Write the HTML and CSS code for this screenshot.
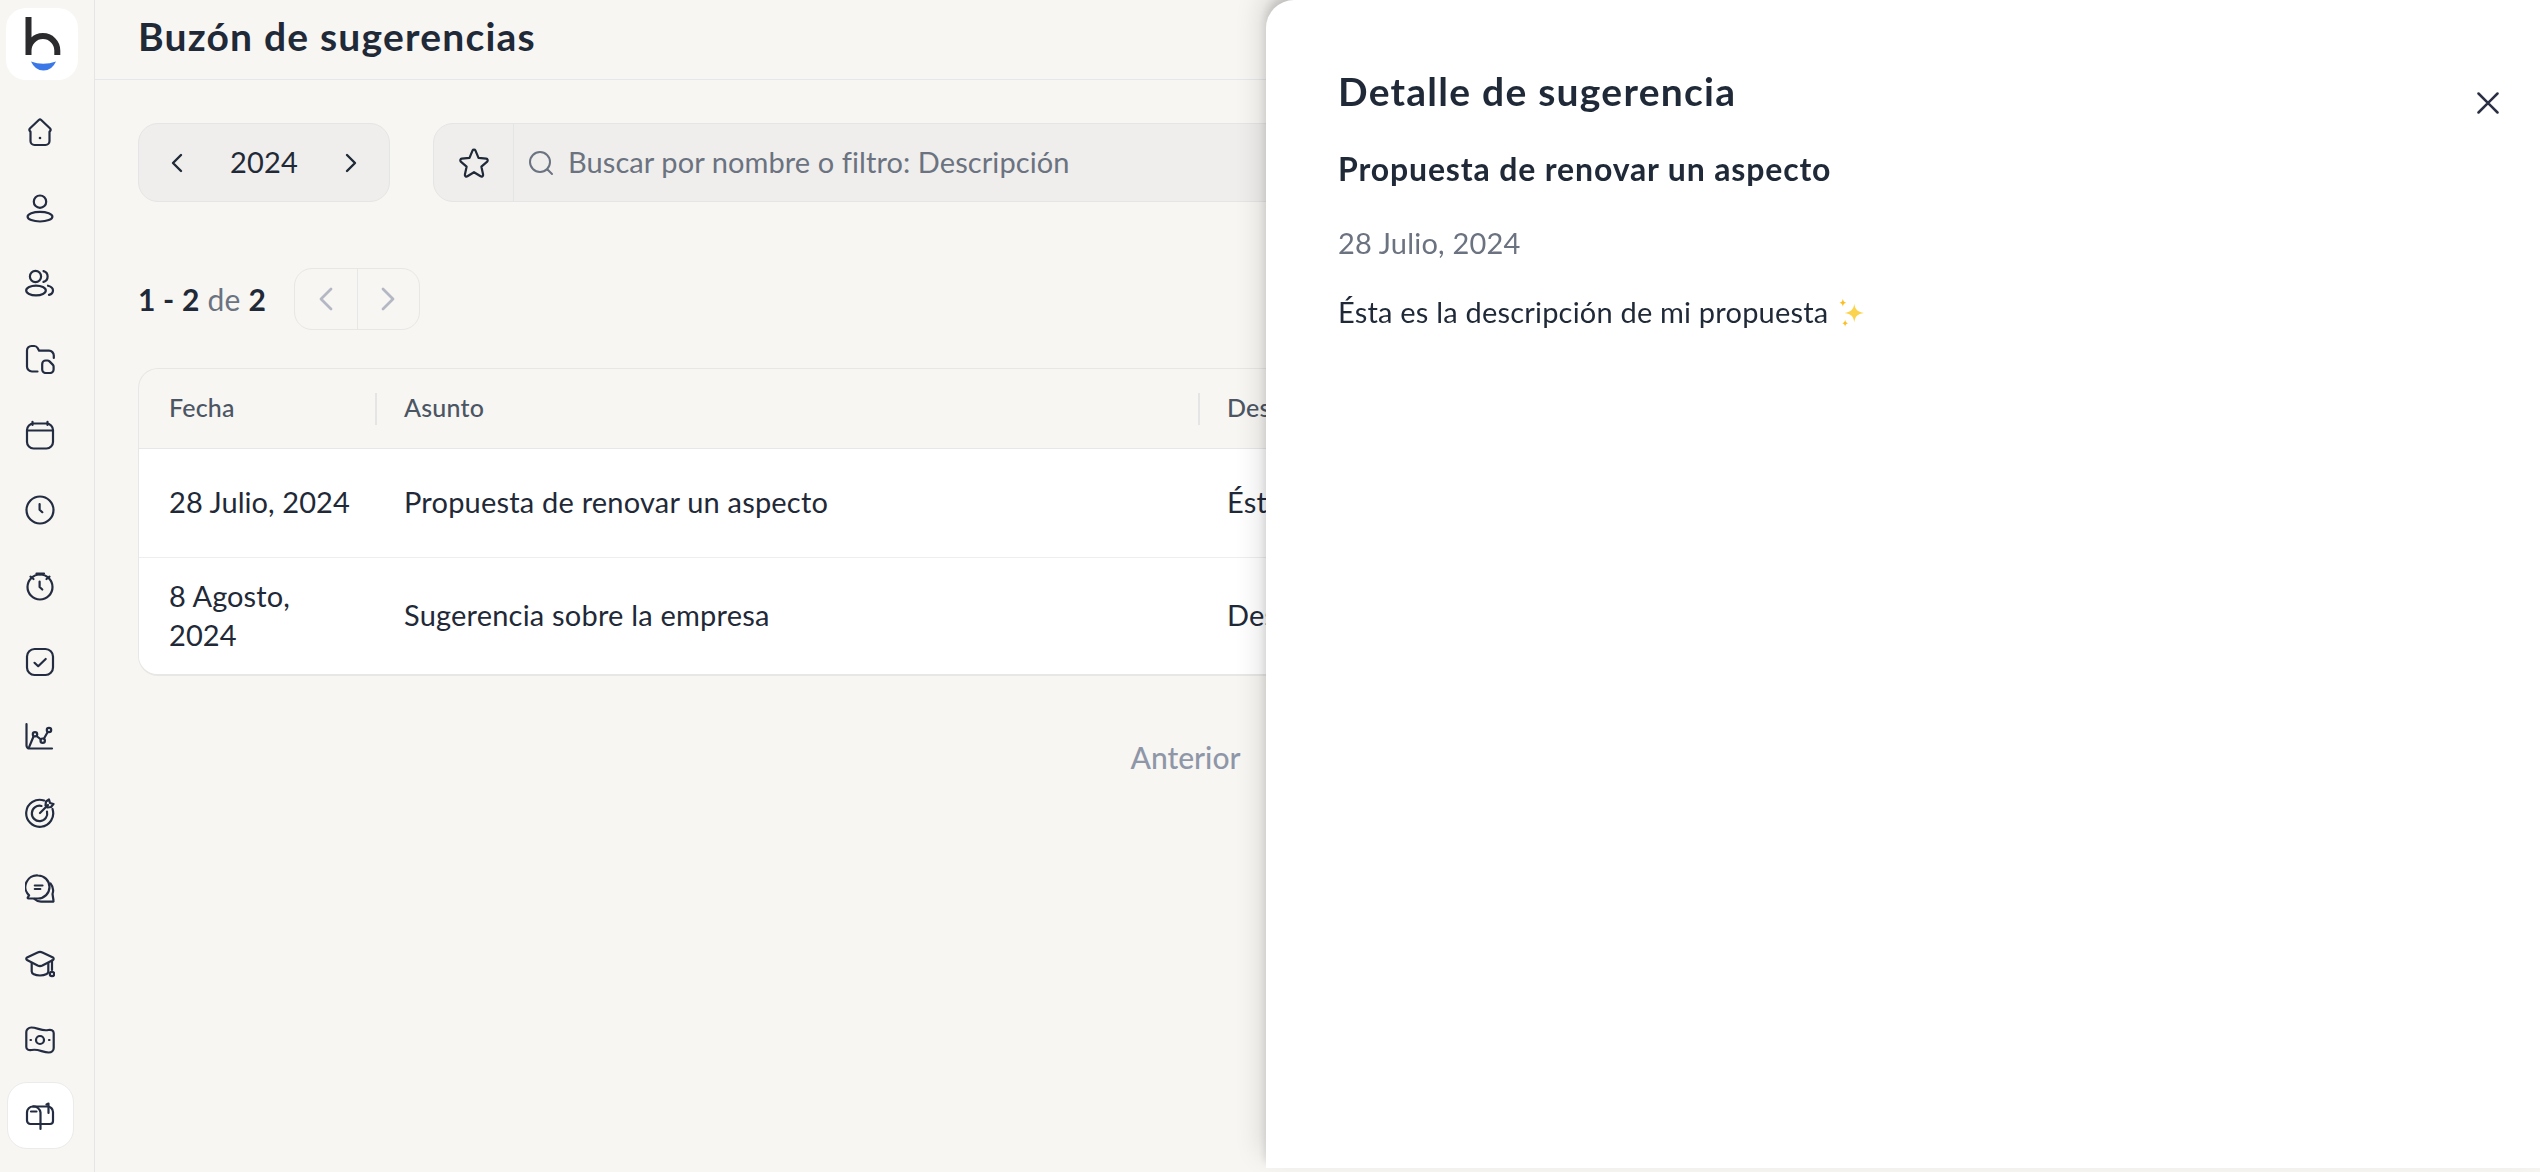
FILE: index.html
```html
<!DOCTYPE html>
<html lang="es">
<head>
    <meta charset="UTF-8">
    <meta name="viewport" content="width=device-width, initial-scale=1.0">
    <title>Buzón de sugerencias</title>
    <link rel="stylesheet" href="styles.css">
</head>
<body>
<div class="app">
    <nav class="sidebar">
        <div class="logo">
            <svg width="72" height="72" viewBox="6 8 72 72">
                <path d="M28.500 17V55M28.500 55V50.500a14.400 14.400 0 0 1 28.800 0V55" fill="none" stroke="#2b2b2d" stroke-width="6"/>
                <path d="M31 61.500Q43 66 56 61.500Q52 70.500 43.500 70.500Q35 70.500 31 61.500Z" fill="#3b78e7"/>
            </svg>
        </div>
        <a class="nav_item"><svg class="nav_icon" viewBox="0 0 30 30"><path d="M13.800 3a1.800 1.800 0 0 1 2.400 0l8.700 8.200c.8.800.9 2 .2 3l-.6.500V24a4 4 0 0 1-4 4H9.500a4 4 0 0 1-4-4v-9.300l-.6-.5c-.7-1-.6-2.200.2-3z"/><circle class="dot" cx="15" cy="21" r="1.300"/></svg></a>
        <a class="nav_item"><svg class="nav_icon" viewBox="0 0 30 30"><circle cx="15" cy="8.700" r="6.200"/><ellipse cx="15" cy="23.700" rx="12.400" ry="4.800"/></svg></a>
        <a class="nav_item"><svg class="nav_icon" viewBox="0 0 30 30"><circle cx="10.500" cy="8.500" r="5.600"/><ellipse cx="11" cy="22.500" rx="9.800" ry="4.800"/><path d="M18.500 3.100a5.600 5.600 0 0 1 0 10.800M23 17.700c3.200.8 5 2.700 5 4.700s-1.500 3.700-4 4.500"/></svg></a>
        <a class="nav_item"><svg class="nav_icon" viewBox="0 0 30 30"><path d="M12.500 27.500H7a5 5 0 0 1-5-5V6.500A4.500 4.500 0 0 1 6.500 2h2.800c1.500 0 2.500.7 3.300 2l1.500 2.700H24a4.800 4.800 0 0 1 4.800 4.800v2.500"/><path d="M17.200 25.500V20a3.500 3.500 0 0 1 3.500-3.500h1.800c.8 0 1.400.3 2 .9l3.200 3.200c.6.600.9 1.200.9 2v2.900a3.500 3.500 0 0 1-3.500 3.500h-4.400a3.500 3.500 0 0 1-3.500-3.500z"/></svg></a>
        <a class="nav_item"><svg class="nav_icon" viewBox="0 0 30 30"><rect x="2" y="3.500" width="26" height="25" rx="6.500"/><path d="M2.500 10.500H27.500M7.500 1.800V5M22.500 1.800V5"/></svg></a>
        <a class="nav_item"><svg class="nav_icon" viewBox="0 0 30 30"><circle cx="15" cy="15" r="13.500"/><path d="M14.600 9v5.700l2.700 2.500"/></svg></a>
        <a class="nav_item"><svg class="nav_icon" viewBox="0 0 30 30"><circle cx="15" cy="16" r="12.500"/><path d="M14.600 10.500v5.500l2.700 2.500M11.500 2.500h7.500M15 2.500v1M5.500 5.700l3 2.300M24.500 5.700l-3 2.300"/></svg></a>
        <a class="nav_item"><svg class="nav_icon" viewBox="0 0 30 30"><rect x="2" y="2" width="26" height="26" rx="7.500"/><path d="M9.500 15.800l3.700 3.400 7.500-7.200"/></svg></a>
        <a class="nav_item"><svg class="nav_icon" viewBox="0 0 30 30"><path d="M1.500 2v21.500a3 3 0 0 0 3 3h22.500M4.300 24.700L8.500 14.500M11.500 14l4.500 3.500M19 16.500l3.700-6.500"/><circle cx="10" cy="12.300" r="2.200"/><circle cx="17.700" cy="18.700" r="2.200"/><circle cx="24" cy="8" r="2.200"/></svg></a>
        <a class="nav_item"><svg class="nav_icon" viewBox="0 0 30 30"><path d="M19 2.500a13.500 13.500 0 1 0 8.500 8.500"/><path d="M16.500 8a7.700 7.700 0 1 0 5.500 5.500"/><path d="M15 15l8-8M20.500 7.500l.5-4 3-2 1 3.500 3.500 1-2.500 3-3.500.5z"/></svg></a>
        <a class="nav_item"><svg class="nav_icon" viewBox="0 0 30 30"><path d="M13 1.500a11.500 11.500 0 0 1 11.500 11.500c0 6.300-5.200 11.500-11.500 11.500H3.500c-.8 0-1.100-.8-.6-1.400l1.200-1.700A11.500 11.500 0 0 1 13 1.500z"/><path d="M9.800 11.500h7.700M9.800 15h5.500M25.500 9.500c2.500 3 3.200 7 2 10.500l1 6.500c.2 1-.2 1.300-1 1.200H16c-2.500 0-4.700-1-6.500-2.700"/></svg></a>
        <a class="nav_item"><svg class="nav_icon" viewBox="0 0 30 30"><path d="M12.600 3.500a6 6 0 0 1 4.800 0l10.600 5c.9.500.9 2 0 2.500l-10.600 5.500a6 6 0 0 1-4.800 0L2 11c-1-.5-1-2 0-2.500z"/><path d="M6.700 14v8.500c0 2 3 4 8.300 4s8.300-2 8.300-4V14M27 11.500V21"/><circle cx="27" cy="25" r="2.200"/></svg></a>
        <a class="nav_item"><svg class="nav_icon" viewBox="0 0 30 30"><path d="M1.300 7c0-2 2-4.500 5-4.500 6 0 10.500 4 17 2.500 2.500-.5 5.400 0 5.400 3v15c0 2.500-2 4.500-5 4.500-6 0-10.500-4-17-2.500-3 .5-5.400-.5-5.400-3z"/><circle cx="15" cy="15" r="4"/><path d="M5.500 15h.5M24 15h.5"/></svg></a>
        <a class="nav_item active"><span class="active_tile"><svg class="nav_icon" viewBox="0 0 30 30"><path d="M15.500 23H5.500A3.500 3.500 0 0 1 2 19.500V11.500A6 6 0 0 1 8 5.500h14.500a5.500 5.500 0 0 1 5.500 5.500v9c0 1.800-1.200 3-3 3h-9.500"/><path d="M8 5.500a7 7 0 0 1 7.500 6V28M6 10.500h5.500M23.500 12V2.500l-2 1"/></svg></span></a>
    </nav>

    <main class="main">
        <header class="top_bar">
            <h1>Buzón de sugerencias</h1>
        </header>

        <div class="content">
            <div class="toolbar">
                <div class="year_box">
                    <svg class="chev" viewBox="0 0 12 20"><path d="M10 2L2 10l8 8"/></svg>
                    <span class="year">2024</span>
                    <svg class="chev" viewBox="0 0 12 20"><path d="M2 2l8 8-8 8"/></svg>
                </div>
                <div class="search_box">
                    <div class="fav_btn">
                        <svg width="32" height="32" viewBox="0 0 32 32"><path class="star" d="M14.500 3.600a1.700 1.700 0 0 1 3 0l3 7.300 7.700.8c1.500.2 2 2 1 3l-5.800 5 1.700 7.800c.3 1.500-1.200 2.600-2.500 1.800L16 25.200l-6.600 4.100c-1.300.8-2.800-.3-2.500-1.800l1.700-7.800-5.800-5c-1-1-.5-2.800 1-3l7.700-.8z"/></svg>
                    </div>
                    <svg class="search_icon" width="26" height="26" viewBox="0 0 26 26"><circle cx="12" cy="12" r="10"/><path d="M19.500 19.500l4.500 4.500"/></svg>
                    <span class="placeholder">Buscar por nombre o filtro: Descripción</span>
                </div>
            </div>

            <div class="count_row">
                <span class="count"><b>1 - 2</b> de <b>2</b></span>
                <div class="count_btns">
                    <span class="count_btn"><svg class="chev light" viewBox="0 0 14 24"><path d="M12 2L2 12l10 10"/></svg></span>
                    <span class="count_btn"><svg class="chev light" viewBox="0 0 14 24"><path d="M2 2l10 10L2 22"/></svg></span>
                </div>
            </div>

            <div class="table_wrap">
                <table class="table">
                    <thead>
                        <tr><th class="col_date">Fecha</th><th class="col_subject">Asunto</th><th>Descripción</th></tr>
                    </thead>
                    <tbody>
                        <tr class="row_one"><td>28 Julio, 2024</td><td>Propuesta de renovar un aspecto</td><td>Ésta es la descripción de mi propuesta</td></tr>
                        <tr><td>8 Agosto, 2024</td><td>Sugerencia sobre la empresa</td><td>Descripción de la sugerencia</td></tr>
                    </tbody>
                </table>
            </div>

            <div class="pager">
                <span>Anterior</span>
                <span class="page_num">1</span>
                <span class="next">Siguiente</span>
            </div>
        </div>
    </main>
</div>

<aside class="panel">
    <svg class="close" width="24" height="24" viewBox="0 0 24 24"><path d="M2.500 2.500l19 19M21.500 2.500l-19 19"/></svg>
    <h2>Detalle de sugerencia</h2>
    <h3>Propuesta de renovar un aspecto</h3>
    <p class="panel_date">28 Julio, 2024</p>
    <p class="panel_text">Ésta es la descripción de mi propuesta
        <svg class="sparkle" width="32" height="32" viewBox="0 0 28 28"><path d="M16 6c.8 5 2.500 7 8.500 8-6 1-7.700 3-8.500 8-.8-5-2.500-7-8.500-8 6-1 7.700-3 8.500-8z" fill="#fcd34d"/><path d="M6 1.500c.3 2.200 1 3 3 3.500-2 .5-2.700 1.300-3 3.500-.3-2.200-1-3-3-3.500 2-.5 2.700-1.300 3-3.500zM8 20c.3 1.800.8 2.500 2.500 3-1.700.5-2.200 1.200-2.500 3-.3-1.800-.8-2.500-2.500-3 1.700-.5 2.200-1.200 2.500-3z" fill="#fbbf24"/></svg>
    </p>
</aside>
</body>
</html>
```

FILE: styles.css
```css
body{
    margin:0;
    background-color: #f7f6f3;
    color: #1f2937;
    font-family: "Lato", "Noto Sans", sans-serif;
    font-size: 29px;
    letter-spacing: 0.2px;
    overflow: hidden;
}
h1, h2, h3, p{
    margin:0;
}
.app{
    display: flex;
    height: 1172px;
}

/* sidebar */
.sidebar{
    width: 94px;
    flex-shrink: 0;
    border-right: 1px solid #e5e5e5;
    box-sizing: content-box;
    display: flex;
    flex-direction: column;
    padding-top: 8px;
}
.logo{
    width: 72px;
    height: 72px;
    margin-left: 6px;
    margin-bottom: 14px;
    background-color: white;
    border-radius: 20px;
}
.logo svg{
    display: block;
}
.nav_item{
    width: 80px;
    height: 75.7px;
    display: flex;
    align-items: center;
    justify-content: center;
    flex-shrink: 0;
}
.nav_icon{
    width: 30px;
    height: 30px;
    fill: none;
    stroke: #232c40;
    stroke-width: 2.2;
    stroke-linecap: round;
    stroke-linejoin: round;
}
.nav_icon .dot{
    fill: #232c40;
    stroke: none;
}
.active_tile{
    width: 67px;
    height: 67px;
    background-color: white;
    border: 1px solid #ebebeb;
    border-radius: 20px;
    box-sizing: border-box;
    display: flex;
    align-items: center;
    justify-content: center;
}

/* main */
.main{
    flex: 1;
    min-width: 0;
}
.top_bar{
    height: 79px;
    border-bottom: 1px solid #e5e7eb;
    padding-left: 43px;
    display: flex;
    align-items: center;
}
.top_bar h1{
    font-size: 39px;
    font-weight: 700;
    letter-spacing: 1.2px;
    padding-bottom: 7px;
}
.content{
    padding: 43px 43px 0 43px;
}
.toolbar{
    display: flex;
    gap: 43px;
    height: 79px;
}
.year_box{
    width: 252px;
    box-sizing: border-box;
    background-color: #efeeec;
    border: 1px solid #e5e5e5;
    border-radius: 20px;
    padding: 0 32px;
    display: flex;
    align-items: center;
    justify-content: space-between;
}
.year{
    font-size: 29px;
    padding-bottom: 2px;
}
.chev{
    width: 12px;
    height: 20px;
    fill: none;
    stroke: #1f2937;
    stroke-width: 2.4;
    stroke-linecap: round;
    stroke-linejoin: round;
}
.chev.light{
    width: 14px;
    height: 24px;
    stroke: #b4b8c4;
    stroke-width: 2.8;
}
.search_box{
    flex: 1;
    background-color: #efeeec;
    border: 1px solid #e5e5e5;
    border-radius: 20px;
    display: flex;
    align-items: center;
    color: #6b7280;
}
.placeholder{
    padding-bottom: 3px;
    margin-left: -1px;
    letter-spacing: 0.08px;
}
.fav_btn{
    width: 79px;
    height: 100%;
    border-right: 1px solid #e5e5e5;
    display: flex;
    align-items: center;
    justify-content: center;
    flex-shrink: 0;
}
.star{
    fill: none;
    stroke: #1f2937;
    stroke-width: 2.200;
    stroke-linejoin: round;
}
.search_icon{
    margin-left: 14px;
    margin-right: 15px;
    fill: none;
    stroke: #6b7280;
    stroke-width: 2;
    stroke-linecap: round;
}
.count_row{
    display: flex;
    align-items: center;
    margin-top: 66px;
    height: 62px;
}
.count{
    color: #6b7280;
    width: 156px;
    font-size: 30px;
    letter-spacing: 0.2px;
}
.count b{
    color: #1f2937;
    font-weight: 700;
}
.count_btns{
    display: flex;
    width: 126px;
    height: 62px;
    box-sizing: border-box;
    border: 1px solid #e7e7e7;
    border-radius: 18px;
}
.count_btn{
    flex: 1;
    display: flex;
    align-items: center;
    justify-content: center;
}
.count_btn + .count_btn{
    border-left: 1px solid #e7e7e7;
}

/* table */
.table_wrap{
    margin-top: 38px;
    border: 1px solid #e7e7e5;
    border-bottom-width: 2px;
    border-radius: 20px;
    overflow: hidden;
    box-sizing: border-box;
}
.table{
    width: 100%;
    border-collapse: collapse;
    table-layout: fixed;
}
.table th{
    height: 79px;
    box-sizing: border-box;
    padding: 0 0 3px 29px;
    text-align: left;
    font-size: 25px;
    font-weight: 500;
    color: #4b5563;
    position: relative;
    border-bottom: 1px solid #e7e7e5;
}
.table th + th::before{
    content: "";
    position: absolute;
    left: 0;
    top: 24px;
    height: 32px;
    width: 2px;
    background-color: #e5e5e5;
}
.col_date{
    width: 236px;
}
.col_subject{
    width: 823px;
}
.table th:first-child, .table td:first-child{
    padding-left: 30px;
    letter-spacing: 0.08px;
}
.table th:first-child{
    letter-spacing: 0.2px;
}
.table td{
    padding: 18px 14px 20px 29px;
    background-color: white;
    line-height: 39px;
}
.row_one td{
    height: 109px;
    box-sizing: border-box;
    border-bottom: 1px solid #eeeeee;
}
.pager{
    display: flex;
    justify-content: center;
    align-items: center;
    gap: 44px;
    margin-top: 63px;
    color: #8f96a8;
    font-weight: 500;
    font-size: 30px;
    letter-spacing: 0;
}
.page_num{
    width: 48px;
    text-align: center;
}
.next{
    width: 128px;
}

/* detail panel */
.panel{
    position: fixed;
    top: 0;
    right: 0;
    width: 1274px;
    height: 1168px;
    box-sizing: border-box;
    padding: 68px 72px 0;
    background-color: white;
    border-top-left-radius: 28px;
    box-shadow: -1px -6px 8px rgba(0, 0, 0, 0.12), -4px -14px 28px rgba(0, 0, 0, 0.14);
}
.panel h2{
    font-size: 39px;
    font-weight: 700;
    letter-spacing: 1.25px;
    line-height: 46px;
}
.panel h3{
    font-size: 32px;
    font-weight: 700;
    letter-spacing: 0.85px;
    margin-top: 35px;
    line-height: 40px;
}
.panel_date{
    color: #6b7280;
    margin-top: 34px;
    line-height: 40px;
}
.panel_text{
    margin-top: 29px;
    line-height: 40px;
}
.sparkle{
    vertical-align: -6px;
}
.close{
    position: absolute;
    top: 91px;
    right: 40px;
    fill: none;
    stroke: #2a2f45;
    stroke-width: 2.500;
    stroke-linecap: round;
}
```
